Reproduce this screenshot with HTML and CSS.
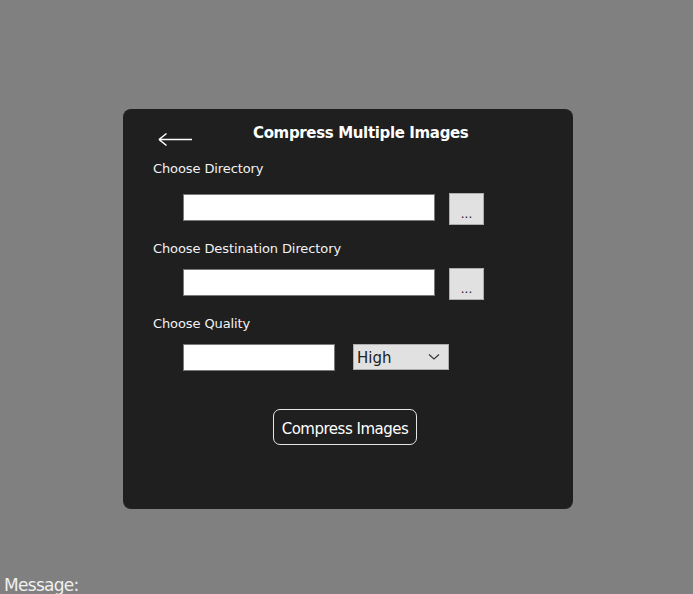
FILE: index.html
```html
<!DOCTYPE html>
<html>
<head>
<meta charset="utf-8">
<link rel="stylesheet" href="styles.css">
</head>
<body>
<div class="card">
  <div class="header">
    <span class="back" aria-label="Back">
      <svg width="36" height="16" viewBox="0 0 36 16"><path d="M1 7.5 H34 M1 7.5 L8.5 1.5 M1 7.5 L8.5 13.5" fill="none" stroke="#fff" stroke-width="1.6"/></svg>
    </span>
    <h1 class="title">Compress Multiple Images</h1>
  </div>
  <div class="label l1">Choose Directory</div>
  <div class="row r1">
    <input class="field wide" type="text">
    <button class="browse">...</button>
  </div>
  <div class="label l2">Choose Destination Directory</div>
  <div class="row r2">
    <input class="field wide" type="text">
    <button class="browse">...</button>
  </div>
  <div class="label l3">Choose Quality</div>
  <div class="row r3">
    <input class="field narrow" type="text">
    <div class="select"><span>High</span>
      <svg width="12" height="8" viewBox="0 0 12 8"><path d="M1 1.5 L6 6 L11 1.5" fill="none" stroke="#333" stroke-width="1.1"/></svg>
    </div>
  </div>
  <button class="compress">Compress Images</button>
</div>
<div class="message">Message:</div>
</body>
</html>
```

FILE: styles.css
```css
html, body {
  margin: 0;
  padding: 0;
}
body {
  background: #808080;
  width: 693px;
  height: 594px;
  overflow: hidden;
  font-family: "DejaVu Sans", "Noto Sans", sans-serif;
  color: #fff;
}
.card {
  margin: 109px 0 0 123px;
  width: 450px;
  height: 400px;
  box-sizing: border-box;
  background: #1f1f1f;
  border-radius: 8px;
  padding: 14px 0 0 30px;
  display: flex;
  flex-direction: column;
  align-items: flex-start;
}
.header {
  display: flex;
  align-items: flex-start;
  height: 20px;
}
.back {
  display: block;
  margin: 9px 0 0 5px;
  width: 36px;
  height: 16px;
}
.back svg { display: block; }
.title {
  margin: 0 0 0 59px;
  font-size: 15px;
  line-height: 20px;
  font-weight: bold;
  color: #fff;
  letter-spacing: -0.35px;
}
.label {
  font-size: 13px;
  line-height: 18px;
  color: #f2f2f2;
  letter-spacing: -0.1px;
}
.l1 { margin-top: 17px; }
.l2 { margin-top: 15px; }
.l3 { margin-top: 15px; }
.row {
  display: flex;
  align-items: flex-start;
  margin-left: 30px;
}
.r1 { margin-top: 15px; }
.r2 { margin-top: 10px; }
.r3 { margin-top: 11px; }
.field {
  box-sizing: border-box;
  height: 27px;
  margin: 1px 0 0 0;
  border: 1px solid #7a7a7a;
  background: #fff;
  padding: 0;
  outline: none;
}
.wide { width: 252px; }
.narrow { width: 152px; margin-top: 0; }
.browse {
  box-sizing: border-box;
  width: 35px;
  height: 32px;
  margin-left: 14px;
  background: #e1e1e1;
  border: 1px solid #adadad;
  border-radius: 0;
  padding: 9px 0 0 0;
  font-family: "DejaVu Sans", sans-serif;
  font-size: 12px;
  color: #222;
}
.select {
  box-sizing: border-box;
  width: 96px;
  height: 26px;
  margin-left: 18px;
  background: #e1e1e1;
  border: 1px solid #adadad;
  display: flex;
  align-items: center;
  justify-content: space-between;
  padding: 2px 8px 0 3px;
  font-size: 15px;
  color: #222;
}
.select svg { display: block; margin-top: -3px; }
.compress {
  margin: 38px 0 0 120px;
  box-sizing: border-box;
  width: 144px;
  height: 36px;
  background: #1f1f1f;
  border: 1px solid #e6e6e6;
  border-radius: 7px;
  color: #fff;
  font-family: "DejaVu Sans", sans-serif;
  font-size: 15px;
  padding: 3px 0 0 0;
  letter-spacing: -0.5px;
}
.message {
  margin: 65px 0 0 4px;
  font-size: 17px;
  line-height: 22px;
  color: #f0f0f0;
  letter-spacing: -0.7px;
}
```
